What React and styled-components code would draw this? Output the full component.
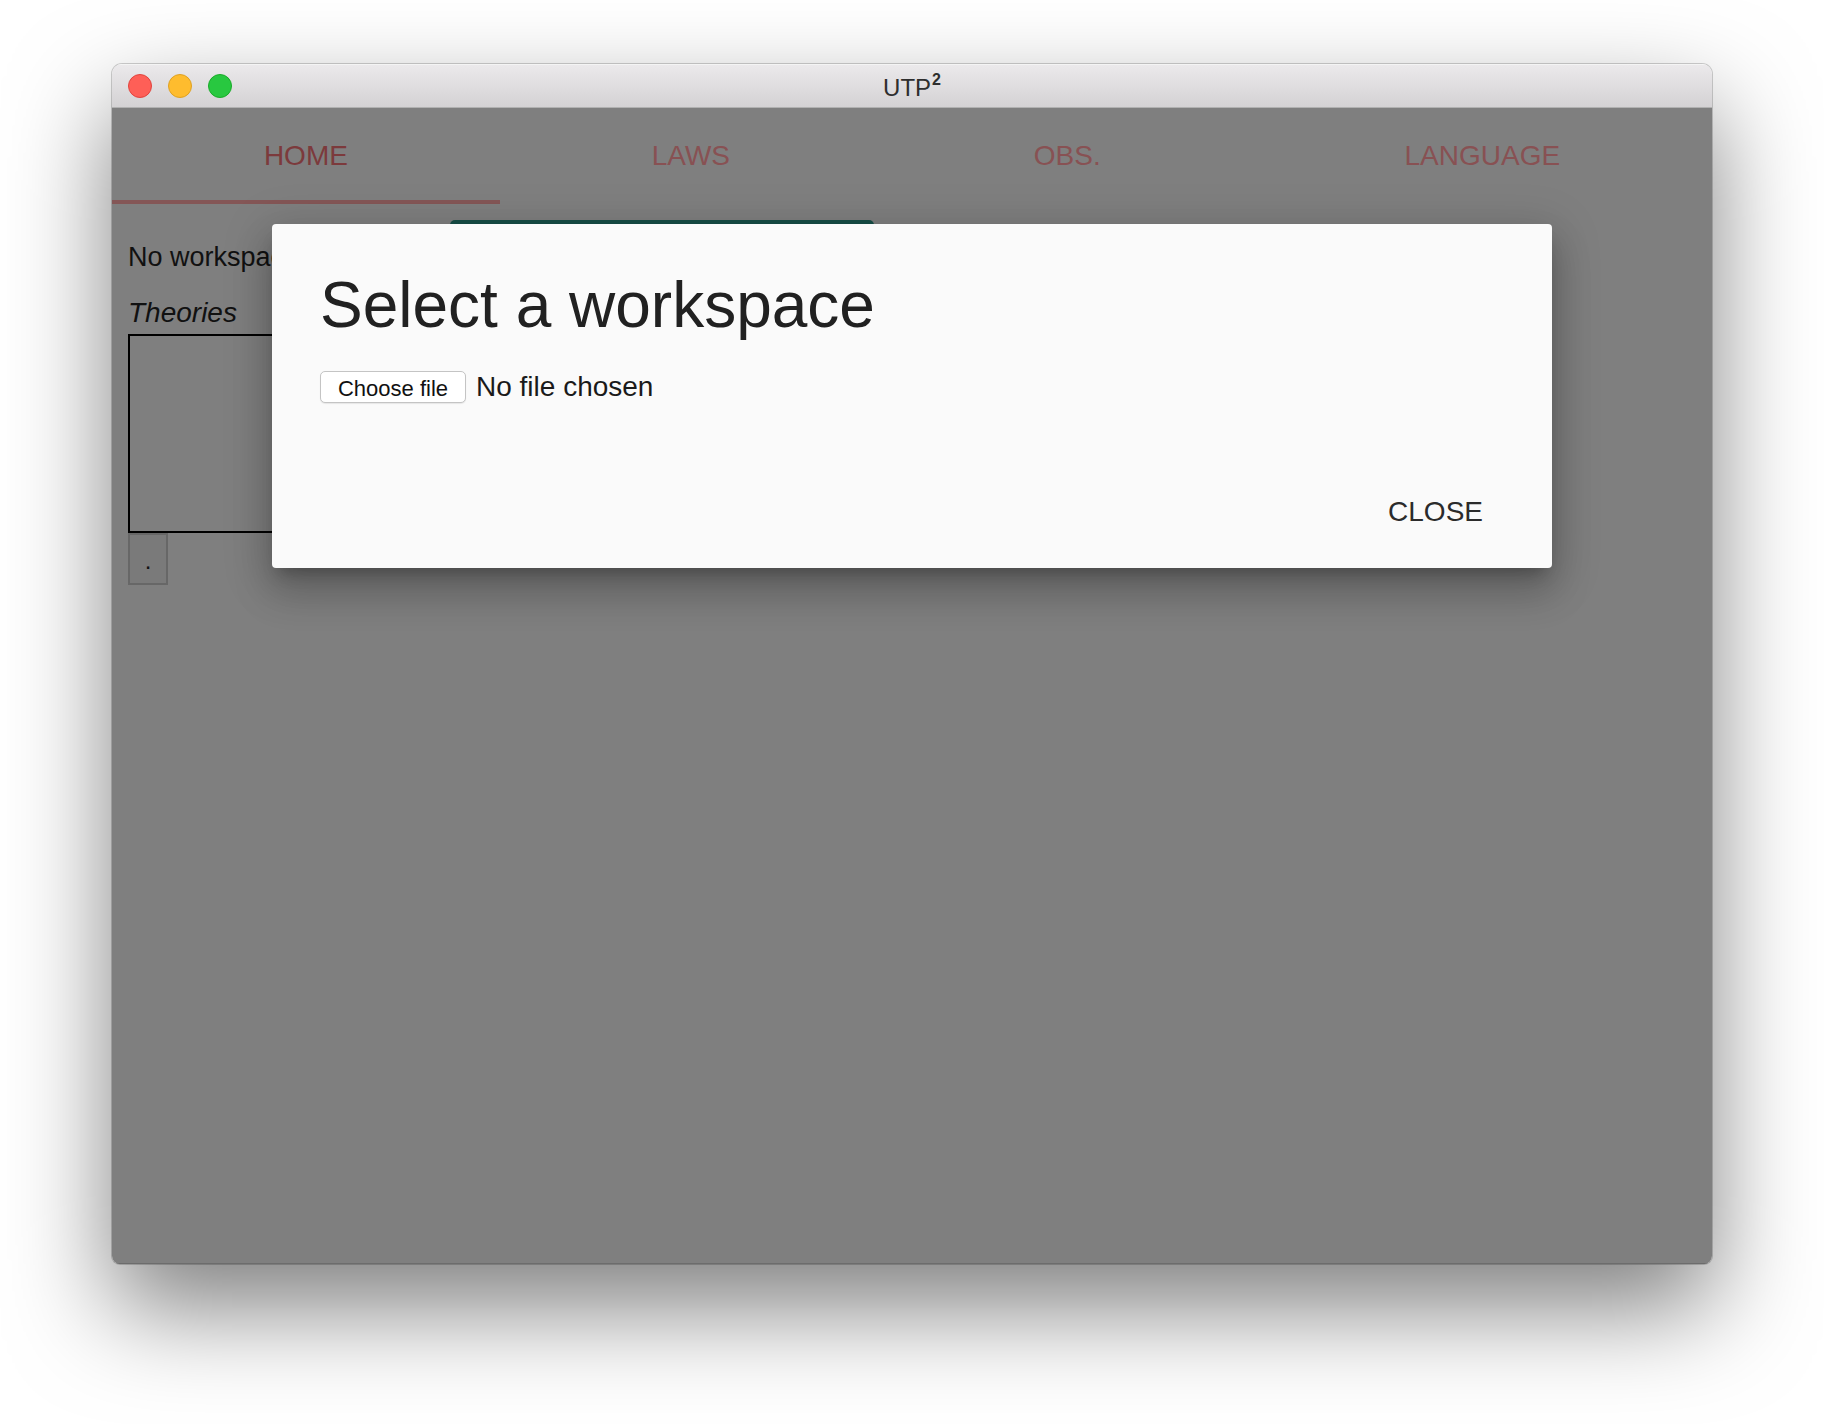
import React from "react";
import styled, { createGlobalStyle } from "styled-components";

const GlobalStyle = createGlobalStyle`
  html, body { margin: 0; padding: 0; background: #ffffff; }
  body { font-family: "Liberation Sans", Arial, sans-serif; }
  * { box-sizing: border-box; }
`;

const Stage = styled.div`
  width: 1824px;
  height: 1424px;
  padding: 64px 0 0 112px;
  background: #ffffff;
  overflow: hidden;
`;

const Window = styled.div`
  position: relative;
  width: 1600px;
  height: 1200px;
  border-radius: 10px 10px 8px 8px;
  overflow: hidden;
  display: flex;
  flex-direction: column;
  box-shadow: 0 44px 100px rgba(0, 0, 0, 0.5), 0 0 0 1px rgba(0, 0, 0, 0.18);
`;

const TitleBar = styled.div`
  height: 44px;
  flex: none;
  display: grid;
  grid-template-columns: 1fr auto 1fr;
  align-items: center;
  padding: 0 16px;
  background: linear-gradient(#ebe9eb, #d4d2d4);
  border-top: 1px solid #f4f4f4;
  border-bottom: 1px solid #b1b1b1;
`;

const Lights = styled.div`
  display: flex;
  gap: 16px;
`;

const Light = styled.span`
  width: 24px;
  height: 24px;
  border-radius: 50%;
  background: ${(p) => p.$bg};
  border: 1px solid ${(p) => p.$border};
`;

const Title = styled.div`
  font-family: "Liberation Sans", Arial, sans-serif;
  font-size: 24px;
  color: #2e2e2e;
  padding-top: 3px;
  sup {
    font-size: 16px;
    font-weight: 700;
    position: relative;
    top: -2px;
    margin-left: 1px;
  }
`;

const Content = styled.div`
  position: relative;
  flex: 1;
  background: #7f7f7f;
  display: flex;
  flex-direction: column;
  border-bottom: 1px solid #6c6c6c;
`;

const Tabs = styled.div`
  display: flex;
  height: 96px;
`;

const Tab = styled.div`
  flex: 1 1 auto;
  display: flex;
  align-items: center;
  justify-content: center;
  font-size: 28px;
  color: ${(p) => (p.$active ? "#7c3a3c" : "#885153")};
  box-shadow: ${(p) => (p.$active ? "inset 0 -4px 0 #845656" : "none")};
  white-space: nowrap;
`;

const Body = styled.div`
  padding: 16px 16px 0 16px;
  display: flex;
  flex-direction: column;
  align-items: flex-start;
`;

const TopRow = styled.div`
  display: grid;
  grid-template-columns: 322px 424px;
  align-items: start;
`;

const Plain = styled.div`
  font-size: 27px;
  line-height: 32px;
  color: #111111;
  margin-top: 21px;
  white-space: nowrap;
`;

const TealButton = styled.div`
  height: 60px;
  background: #174f48;
  border-radius: 5px;
`;

const Label = styled.div`
  font-size: 28px;
  line-height: 32px;
  font-style: italic;
  color: #111111;
  margin-top: 17px;
`;

const ListBox = styled.div`
  margin-top: 5px;
  width: 620px;
  height: 199px;
  border: 2px solid #000000;
`;

const DotButton = styled.div`
  width: 40px;
  height: 52px;
  background: #7a7a7a;
  border: 2px solid #676767;
  display: flex;
  align-items: flex-end;
  justify-content: center;
  padding-bottom: 10px;
  font-size: 24px;
  line-height: 24px;
  color: #111;
`;

const Overlay = styled.div`
  position: absolute;
  inset: 0;
  display: flex;
  justify-content: center;
  align-items: flex-start;
  padding-top: 116px;
`;

const Dialog = styled.div`
  width: 1280px;
  height: 344px;
  background: #fafafa;
  border-radius: 4px;
  display: flex;
  flex-direction: column;
  box-shadow: 0 11px 15px -7px rgba(0, 0, 0, 0.25),
    0 24px 38px 3px rgba(0, 0, 0, 0.16), 0 9px 46px 8px rgba(0, 0, 0, 0.14);
`;

const DialogBody = styled.div`
  padding: 50px 48px 0 48px;
`;

const DialogTitle = styled.h2`
  margin: 0;
  font-weight: 400;
  font-size: 64px;
  line-height: 63px;
  color: #212121;
`;

const FileRow = styled.div`
  margin-top: 34px;
  display: flex;
  align-items: center;
  gap: 10px;
`;

const ChooseButton = styled.div`
  width: 146px;
  height: 32px;
  background: #ffffff;
  border: 1px solid #c4c4c4;
  border-radius: 5px;
  display: flex;
  align-items: center;
  justify-content: center;
  font-family: "Liberation Sans", Arial, sans-serif;
  font-size: 22px;
  padding-top: 3px;
  color: #111;
  box-shadow: 0 1px 1px rgba(0, 0, 0, 0.08);
`;

const FileText = styled.span`
  font-size: 28px;
  line-height: 32px;
  color: #1a1a1a;
`;

const Actions = styled.div`
  margin-top: auto;
  display: flex;
  justify-content: flex-end;
  padding: 0 69px 38px 0;
`;

const CloseButton = styled.div`
  font-size: 28px;
  line-height: 36px;
  color: #2b2b2b;
`;

export default function App() {
  return (
    <>
      <GlobalStyle />
      <Stage>
        <Window>
          <TitleBar>
            <Lights>
              <Light $bg="#fe5f57" $border="#e0443e" />
              <Light $bg="#febc2e" $border="#dea123" />
              <Light $bg="#28c840" $border="#1aab29" />
            </Lights>
            <Title>
              UTP<sup>2</sup>
            </Title>
            <span />
          </TitleBar>
          <Content>
            <Tabs>
              <Tab $active>HOME</Tab>
              <Tab>LAWS</Tab>
              <Tab>OBS.</Tab>
              <Tab>LANGUAGE</Tab>
            </Tabs>
            <Body>
              <TopRow>
                <Plain>No workspace selected</Plain>
                <TealButton />
              </TopRow>
              <Label>Theories</Label>
              <ListBox />
              <DotButton>.</DotButton>
            </Body>
            <Overlay>
              <Dialog>
                <DialogBody>
                  <DialogTitle>Select a workspace</DialogTitle>
                  <FileRow>
                    <ChooseButton>Choose file</ChooseButton>
                    <FileText>No file chosen</FileText>
                  </FileRow>
                </DialogBody>
                <Actions>
                  <CloseButton>CLOSE</CloseButton>
                </Actions>
              </Dialog>
            </Overlay>
          </Content>
        </Window>
      </Stage>
    </>
  );
}
